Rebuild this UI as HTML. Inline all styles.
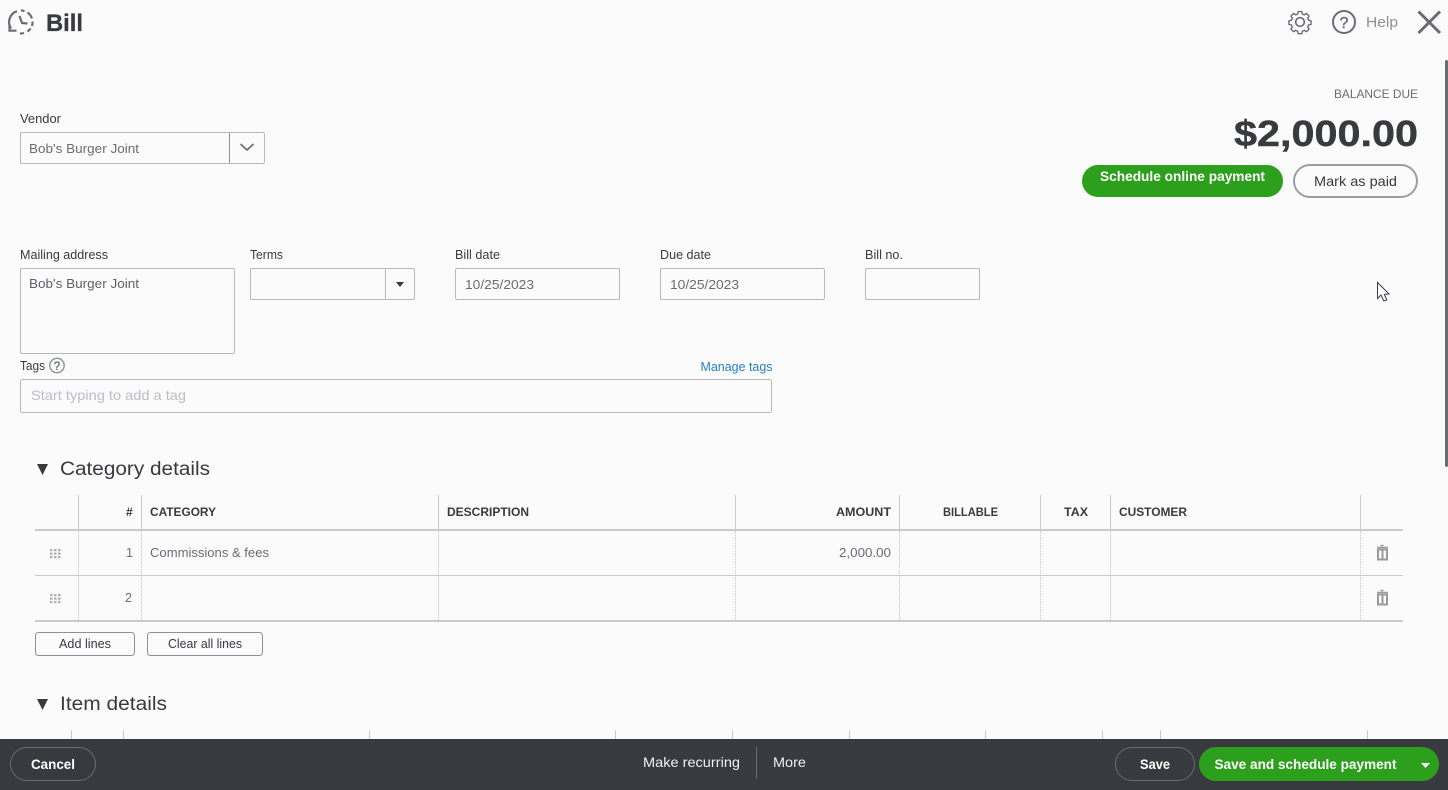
<!DOCTYPE html>
<html lang="en">
<head>
<meta charset="utf-8">
<title>Bill</title>
<style>
html,body{margin:0;padding:0;width:1448px;height:790px;overflow:hidden;background:#fbfbfb}
svg{display:block;position:absolute;left:0;top:0}
text{font-family:"Liberation Sans",sans-serif;font-size:12.5px;fill:#393a3d}
.l{fill:#393a3d;font-size:12.5px}
.v{fill:#6b6c72;font-size:12.5px}
.h{font-weight:bold;font-size:12px;fill:#393a3d}
.b{fill:none;stroke:#b5b8bf;stroke-width:1}
.sl{stroke:#c9c9c9;stroke-width:1}
.dl{stroke:#c4c4c4;stroke-width:1;stroke-dasharray:1 1}
.w{fill:#fff}
</style>
</head>
<body>
<svg width="1448" height="790" viewBox="0 0 1448 790" xmlns="http://www.w3.org/2000/svg">
<rect width="1448" height="790" fill="#fbfbfb"/>

<!-- header -->
<g fill="none" stroke="#6b6c72" stroke-width="2.2">
<path d="M11 28.5A11.5 11.5 0 0 1 17 11.2"/>
<path d="M21 10.5A11.5 11.5 0 0 1 24.5 11" />
<path d="M27.5 12.5A11.5 11.5 0 0 1 32 18.5"/>
<path d="M32.5 21.5A11.5 11.5 0 0 1 32 26"/>
<path d="M30.5 28.5A11.5 11.5 0 0 1 27.5 31.5"/>
<path d="M24 33A11.5 11.5 0 0 1 20 33.5"/>
<path d="M9.5 24.5V30.7H16.5"/>
<path d="M19.5 16L22 23L27.5 23.5"/>
</g>
<text x="46" y="31" style="font-size:24px;font-weight:bold;stroke:#393a3d;stroke-width:.3" textLength="37" lengthAdjust="spacingAndGlyphs">Bill</text>

<g fill="none" stroke="#6b6c72" stroke-width="1.6">
<path d="M1298 11.5h4l.7 2.8 2.3 1 2.5-1.5 2.9 2.9-1.5 2.5 1 2.3 2.8.7v4l-2.8.7-1 2.3 1.5 2.5-2.9 2.9-2.5-1.5-2.3 1-.7 2.8h-4l-.7-2.8-2.3-1-2.5 1.5-2.9-2.9 1.5-2.5-1-2.3-2.8-.7v-4l2.8-.7 1-2.3-1.5-2.5 2.9-2.9 2.5 1.5 2.3-1z" transform="translate(1300 22) scale(.87) translate(-1300 -23.5)"/>
<circle cx="1300" cy="22" r="4.3"/>
</g>
<circle cx="1344" cy="22" r="11" fill="none" stroke="#6b6c72" stroke-width="2"/>
<text x="1344" y="28" text-anchor="middle" style="font-size:16px;fill:#6b6c72;stroke:#6b6c72;stroke-width:.4">?</text>
<text x="1366" y="27" style="font-size:15px;fill:#8d9096" textLength="32" lengthAdjust="spacingAndGlyphs">Help</text>
<path d="M1418.5 11.5L1440 33M1440 11.5L1418.5 33" stroke="#6b6c72" stroke-width="3" fill="none"/>

<rect x="1445" y="60" width="3" height="407" rx="1.5" fill="#6b6c72"/>

<!-- vendor -->
<text class="l" x="20" y="123" textLength="41" lengthAdjust="spacingAndGlyphs">Vendor</text>
<rect class="b" x="20.5" y="132.5" width="244" height="31" rx="1.5"/>
<path d="M229.5 133v30" stroke="#8d9096" stroke-width="1"/>
<path d="M240.5 144l6.5 6 6.5-6" fill="none" stroke="#6b6c72" stroke-width="1.7"/>
<text class="v" x="29" y="153" textLength="110" lengthAdjust="spacingAndGlyphs">Bob's Burger Joint</text>

<!-- balance -->
<text x="1418" y="98" text-anchor="end" style="font-size:12px;fill:#6b6c72" textLength="84" lengthAdjust="spacingAndGlyphs">BALANCE DUE</text>
<text x="1234" y="146" style="font-size:36px;font-weight:bold;stroke:#393a3d;stroke-width:.4" textLength="184" lengthAdjust="spacingAndGlyphs">$2,000.00</text>
<rect x="1082" y="165" width="201" height="32" rx="16" fill="#2ca01c"/>
<text x="1100" y="181" class="w" style="font-size:13.5px;font-weight:bold" textLength="165" lengthAdjust="spacingAndGlyphs">Schedule online payment</text>
<rect x="1294" y="165" width="123" height="32" rx="16" fill="#fbfbfb" stroke="#9a9da3" stroke-width="2"/>
<text x="1314" y="186" style="font-size:14px" textLength="83" lengthAdjust="spacingAndGlyphs">Mark as paid</text>

<!-- form row -->
<text class="l" x="20" y="259" textLength="88" lengthAdjust="spacingAndGlyphs">Mailing address</text>
<rect class="b" x="20.5" y="268.5" width="214" height="85" rx="1.5"/>
<text class="v" x="29" y="288" style="fill:#5f6066" textLength="110" lengthAdjust="spacingAndGlyphs">Bob's Burger Joint</text>

<text class="l" x="250" y="259" textLength="33" lengthAdjust="spacingAndGlyphs">Terms</text>
<rect class="b" x="250.5" y="268.5" width="164" height="31" rx="1.5"/>
<path d="M385.5 269v30" class="b"/>
<path d="M396 282h8l-4 5z" fill="#393a3d"/>

<text class="l" x="455" y="259" textLength="45" lengthAdjust="spacingAndGlyphs">Bill date</text>
<rect class="b" x="455.5" y="268.5" width="164" height="31" rx="1.5"/>
<text class="v" x="465" y="289" textLength="69" lengthAdjust="spacingAndGlyphs">10/25/2023</text>

<text class="l" x="660" y="259" textLength="51" lengthAdjust="spacingAndGlyphs">Due date</text>
<rect class="b" x="660.5" y="268.5" width="164" height="31" rx="1.5"/>
<text class="v" x="670" y="289" textLength="69" lengthAdjust="spacingAndGlyphs">10/25/2023</text>

<text class="l" x="865" y="259" textLength="38" lengthAdjust="spacingAndGlyphs">Bill no.</text>
<rect class="b" x="865.5" y="268.5" width="114" height="31" rx="1.5"/>

<!-- cursor -->
<path d="M1377.5 282.5V298.5L1381 295L1383.8 301L1386.8 299.8L1384.3 294.3L1389 294Z" fill="#fff" stroke="#393a4d" stroke-width="1"/>

<!-- tags -->
<text class="l" x="20" y="370" textLength="25" lengthAdjust="spacingAndGlyphs">Tags</text>
<circle cx="57" cy="365.5" r="7.2" fill="none" stroke="#8d9096" stroke-width="1.4"/>
<text x="57" y="369.8" text-anchor="middle" style="font-size:11.5px;fill:#6b6c72;stroke:#6b6c72;stroke-width:.3">?</text>
<text x="700.5" y="371" style="font-size:12.5px;fill:#2a7fc4" textLength="72" lengthAdjust="spacingAndGlyphs">Manage tags</text>
<rect class="b" x="20.5" y="379.5" width="751" height="33" rx="2"/>
<text x="31" y="400" style="font-size:14px;fill:#babec5" textLength="155" lengthAdjust="spacingAndGlyphs">Start typing to add a tag</text>

<!-- category -->
<path d="M37 464h11l-5.5 11z" fill="#393a3d"/>
<text x="60" y="475" style="font-size:19px;fill:#393a3d" textLength="150" lengthAdjust="spacingAndGlyphs">Category details</text>

<g>
<path class="sl" d="M78.5 495v35M141.5 495v35M438.5 495v35M735.5 495v35M899.5 495v35M1040.5 495v35M1110.5 495v35M1360.5 495v35"/>
<path class="dl" d="M78.5 531v90M141.5 531v90M438.5 531v90M735.5 531v90M899.5 531v90M1040.5 531v90M1110.5 531v90M1360.5 531v90"/>
<rect x="35" y="529" width="1368" height="2" fill="#cbcbcb"/>
<rect x="35" y="575" width="1368" height="1" fill="#cbcbcb"/>
<rect x="35" y="620" width="1368" height="2" fill="#cbcbcb"/>
</g>

<text class="h" x="126" y="516">#</text>
<text class="h" x="150" y="516" textLength="66" lengthAdjust="spacingAndGlyphs">CATEGORY</text>
<text class="h" x="447" y="516" textLength="82" lengthAdjust="spacingAndGlyphs">DESCRIPTION</text>
<text class="h" x="836" y="516" textLength="55" lengthAdjust="spacingAndGlyphs">AMOUNT</text>
<text class="h" x="943" y="516" textLength="55" lengthAdjust="spacingAndGlyphs">BILLABLE</text>
<text class="h" x="1064" y="516" textLength="24" lengthAdjust="spacingAndGlyphs">TAX</text>
<text class="h" x="1119" y="516" textLength="68" lengthAdjust="spacingAndGlyphs">CUSTOMER</text>

<text class="v" x="126" y="557">1</text>
<text class="v" x="125" y="602">2</text>
<text class="v" x="150" y="557" textLength="119" lengthAdjust="spacingAndGlyphs">Commissions &amp; fees</text>
<text class="v" x="839" y="557" textLength="52" lengthAdjust="spacingAndGlyphs">2,000.00</text>

<g fill="#b0b0b0">
<rect x="50" y="549" width="2.5" height="2.2"/><rect x="54" y="549" width="2.5" height="2.2"/><rect x="58" y="549" width="2.5" height="2.2"/>
<rect x="50" y="552.5" width="2.5" height="2.2"/><rect x="54" y="552.5" width="2.5" height="2.2"/><rect x="58" y="552.5" width="2.5" height="2.2"/>
<rect x="50" y="556" width="2.5" height="2.2"/><rect x="54" y="556" width="2.5" height="2.2"/><rect x="58" y="556" width="2.5" height="2.2"/>
<rect x="50" y="594" width="2.5" height="2.2"/><rect x="54" y="594" width="2.5" height="2.2"/><rect x="58" y="594" width="2.5" height="2.2"/>
<rect x="50" y="597.5" width="2.5" height="2.2"/><rect x="54" y="597.5" width="2.5" height="2.2"/><rect x="58" y="597.5" width="2.5" height="2.2"/>
<rect x="50" y="601" width="2.5" height="2.2"/><rect x="54" y="601" width="2.5" height="2.2"/><rect x="58" y="601" width="2.5" height="2.2"/>
</g>

<g fill="none" stroke="#9a9a9a">
<path d="M1380.5 545.5h3M1377 547.5h11" stroke-width="1.4"/>
<path d="M1378 549.5h9v10h-9zM1382.5 549.5v10" stroke-width="2"/>
<path d="M1380.5 590.5h3M1377 592.5h11" stroke-width="1.4"/>
<path d="M1378 594.5h9v10h-9zM1382.5 594.5v10" stroke-width="2"/>
</g>

<rect x="35.5" y="632.5" width="99" height="23" rx="3" fill="#fbfbfb" stroke="#8d9096"/>
<text x="59" y="648" style="font-size:12.5px" textLength="52" lengthAdjust="spacingAndGlyphs">Add lines</text>
<rect x="147.5" y="632.5" width="115" height="23" rx="3" fill="#fbfbfb" stroke="#8d9096"/>
<text x="168" y="648" style="font-size:12.5px" textLength="74" lengthAdjust="spacingAndGlyphs">Clear all lines</text>

<!-- item -->
<path d="M37 699h11l-5.5 11z" fill="#393a3d"/>
<text x="60" y="710" style="font-size:19px;fill:#393a3d" textLength="107" lengthAdjust="spacingAndGlyphs">Item details</text>
<path class="sl" d="M71.5 730v9M123.5 730v9M369.5 730v9M615.5 730v9M732.5 730v9M849.5 730v9M985.5 730v9M1102.5 730v9M1160.5 730v9M1367.5 730v9"/>

<!-- footer -->
<rect x="0" y="739" width="1448" height="51" fill="#393a3f"/>
<rect x="10.5" y="747.5" width="85" height="33" rx="16.5" fill="none" stroke="#6b6c72"/>
<text x="31" y="769" class="w" style="font-size:14px;font-weight:bold" textLength="44" lengthAdjust="spacingAndGlyphs">Cancel</text>
<text x="643" y="767" class="w" style="font-size:14px;fill:#eef0f2" textLength="97" lengthAdjust="spacingAndGlyphs">Make recurring</text>
<path d="M756.5 747v32" stroke="#6b6c72"/>
<text x="773" y="767" class="w" style="font-size:14px;fill:#eef0f2" textLength="33" lengthAdjust="spacingAndGlyphs">More</text>
<rect x="1115.5" y="747.5" width="79" height="33" rx="16.5" fill="none" stroke="#6b6c72"/>
<text x="1140" y="769" class="w" style="font-size:14px;font-weight:bold" textLength="30" lengthAdjust="spacingAndGlyphs">Save</text>
<rect x="1199" y="747" width="240" height="34" rx="17" fill="#2ca01c"/>
<text x="1214.5" y="769" class="w" style="font-size:14px;font-weight:bold" textLength="182" lengthAdjust="spacingAndGlyphs">Save and schedule payment</text>
<path d="M1421 763h9l-4.5 5z" fill="#fff"/>
</svg>
</body>
</html>
